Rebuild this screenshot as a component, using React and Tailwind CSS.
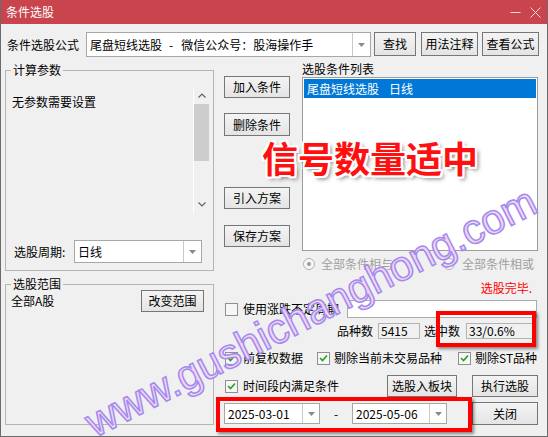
import React from "react";

const Btn = ({ children, className = "" }) => (
  <div
    className={`shrink-0 flex items-center justify-center border border-[#767676] bg-gradient-to-b from-[#f4f4f4] to-[#e4e4e4] text-[12px] leading-none text-black ${className}`}
  >
    {children}
  </div>
);

const Arrow = () => (
  <svg width="7" height="4" viewBox="0 0 7 4">
    <path d="M0 0H7L3.5 4Z" fill="#8a8a8a" />
  </svg>
);

const Combo = ({ children, className = "", arrowClass = "w-[18px]" }) => (
  <div className={`shrink-0 flex border border-[#a7a7a7] bg-white ${className}`}>
    <div className="flex-1 flex items-center pl-[3px] overflow-hidden whitespace-nowrap">{children}</div>
    <div className={`border-l border-[#c8c8c8] flex items-center justify-center ${arrowClass}`}>
      <Arrow />
    </div>
  </div>
);

const Check = ({ checked, className = "" }) => (
  <div
    className={`shrink-0 w-[13px] h-[13px] border border-[#8f8f8f] bg-[#f6f6f6] flex items-center justify-center ${className}`}
  >
    {checked && (
      <svg width="9" height="8" viewBox="0 0 9 8">
        <path d="M1 4L3.5 6.5L8 1.5" fill="none" stroke="#22a022" strokeWidth="1.6" />
      </svg>
    )}
  </div>
);

const Radio = ({ checked, className = "" }) => (
  <div
    className={`shrink-0 w-[12px] h-[12px] rounded-full border border-[#b4b4b4] bg-[#f6f6f6] flex items-center justify-center ${className}`}
  >
    {checked && <div className="w-[4px] h-[4px] rounded-full bg-[#9a9a9a]" />}
  </div>
);

const Field = ({ children, className = "" }) => (
  <div
    className={`shrink-0 h-[16px] border border-[#b3b3b3] bg-[#f0f0f0] pl-[2px] leading-[14px] ${className}`}
  >
    {children}
  </div>
);

export default function App() {
  return (
    <div className="relative w-[548px] h-[437px] overflow-hidden bg-[#f0f0f0] border-x border-b border-[#6b6b6b] font-['Noto_Sans_CJK_SC',sans-serif] text-[12px] text-black leading-[16px]">
      {/* Title bar */}
      <div className="h-[24px] bg-[#c9444c] flex items-center pl-[5px] pr-[6px] text-white">
        <span className="leading-[16px]">条件选股</span>
        <div className="ml-auto flex items-center gap-[9px]">
          <svg width="11" height="11" viewBox="0 0 11 11">
            <path d="M0.5 5.5H10.5" stroke="#f6dcdd" strokeWidth="1" />
          </svg>
          <svg width="11" height="11" viewBox="0 0 11 11">
            <path d="M0.5 0.5L10.5 10.5M10.5 0.5L0.5 10.5" stroke="#f6dcdd" strokeWidth="1" />
          </svg>
        </div>
      </div>

      {/* Formula row */}
      <div className="mt-[8px] flex items-start pl-[6px] h-[25px]">
        <div className="shrink-0 w-[79px] leading-[25px]">条件选股公式</div>
        <Combo className="w-[285px] h-[25px]">
          <span>尾盘短线选股</span>
          <span className="ml-[7px] mr-[8px]">-</span>
          <span>微信公众号：股海操作手</span>
        </Combo>
        <Btn className="ml-[3px] w-[42px] h-[24px]">查找</Btn>
        <Btn className="ml-[5px] w-[57px] h-[24px]">用法注释</Btn>
        <Btn className="ml-[4px] w-[57px] h-[24px]">查看公式</Btn>
      </div>

      {/* Main */}
      <div className="mt-[5px] flex">
        {/* Left column */}
        <div className="shrink-0 ml-[4px] w-[209px] flex flex-col">
          <fieldset className="h-[209px] border border-[#b5b5b5]">
            <legend className="ml-[5px] px-[2px] leading-[16px]">计算参数</legend>
            <div className="mt-[9px] h-[126px] flex">
              <div className="flex-1 pl-[6px] pt-[7px]">无参数需要设置</div>
              <div className="w-[16px] mr-[4px] border-l border-white flex flex-col">
                <div className="h-[17px] flex items-center justify-center">
                  <svg width="8" height="5" viewBox="0 0 8 5">
                    <path d="M0.5 4.5L4 1L7.5 4.5" fill="none" stroke="#606060" strokeWidth="1.2" />
                  </svg>
                </div>
                <div className="w-full h-[57px] bg-[#cdcdcd]" />
                <div className="flex-1" />
                <div className="h-[17px] flex items-center justify-center">
                  <svg width="8" height="5" viewBox="0 0 8 5">
                    <path d="M0.5 0.5L4 4L7.5 0.5" fill="none" stroke="#606060" strokeWidth="1.2" />
                  </svg>
                </div>
              </div>
            </div>
            <div className="mt-[27px] flex items-center h-[23px] pl-[8px]">
              <div className="shrink-0 w-[60px]">选股周期:</div>
              <Combo className="w-[128px] h-[23px]">日线</Combo>
            </div>
          </fieldset>

          <fieldset className="mt-[5px] h-[149px] border border-[#b5b5b5]">
            <legend className="ml-[5px] px-[2px] leading-[16px]">选股范围</legend>
            <div className="-mt-[2px] h-[22px] flex items-center justify-between pl-[5px] pr-[9px]">
              <span>全部A股</span>
              <Btn className="w-[63px] h-[22px]">改变范围</Btn>
            </div>
          </fieldset>
        </div>

        {/* Right area */}
        <div className="shrink-0 ml-[10px] w-[316px] flex flex-col">
          <div className="flex h-[210px]">
            <div className="shrink-0 w-[66px] flex flex-col">
              <Btn className="mt-[14px] h-[22px]">加入条件</Btn>
              <Btn className="mt-[15px] h-[23px]">删除条件</Btn>
              <Btn className="mt-[51px] h-[22px]">引入方案</Btn>
              <Btn className="mt-[16px] h-[22px]">保存方案</Btn>
            </div>
            <div className="shrink-0 ml-[12px] w-[236px] flex flex-col">
              <div className="h-[15px] leading-[13px]">选股条件列表</div>
              <div className="h-[174px] border border-[#9c9c9c] bg-white pt-[1px] px-[1px]">
                <div className="h-[19px] bg-[#0078d7] text-white pl-[3px] leading-[19px] whitespace-nowrap">
                  尾盘短线选股<span className="ml-[10px]">日线</span>
                </div>
              </div>
              <div className="mt-[5px] h-[16px] flex items-center text-[#a0a0a0]">
                <Radio checked className="ml-[1px]" />
                <span className="ml-[6px] whitespace-nowrap">全部条件相与</span>
                <Radio className="ml-[50px]" />
                <span className="ml-[7px] whitespace-nowrap">全部条件相或</span>
              </div>
            </div>
          </div>

          <div className="mt-[9px] h-[14px] leading-[14px] flex justify-end pr-[8px] text-[#ff0000]">选股完毕.</div>

          <div className="mt-[5px] h-[18px] flex items-center">
            <Check className="ml-[1px]" />
            <span className="shrink-0 ml-[5px] w-[96px] whitespace-nowrap">使用涨跌不定周期</span>
            <div className="shrink-0 ml-[8px] w-[190px] h-[18px] bg-white border border-[#ababab]" />
          </div>

          <div className="mt-[5px] h-[16px] flex items-center whitespace-nowrap">
            <span className="shrink-0 ml-[113px]">品种数</span>
            <Field className="ml-[5px] w-[42px]">5415</Field>
            <span className="shrink-0 ml-[4px]">选中数</span>
            <Field className="ml-[6px] w-[67px]">33/0.6%</Field>
          </div>

          <div className="mt-[12px] h-[14px] flex items-center whitespace-nowrap">
            <Check checked className="ml-[1px]" />
            <span className="shrink-0 ml-[5px]">前复权数据</span>
            <Check checked className="ml-[14px]" />
            <span className="shrink-0 ml-[4px]">剔除当前未交易品种</span>
            <Check checked className="ml-[16px]" />
            <span className="shrink-0 ml-[4px]">剔除ST品种</span>
          </div>

          <div className="mt-[10px] h-[22px] flex items-center whitespace-nowrap">
            <Check checked className="ml-[1px]" />
            <span className="shrink-0 ml-[5px] w-[96px]">时间段内满足条件</span>
            <Btn className="ml-[48px] w-[70px] h-[22px]">选股入板块</Btn>
            <Btn className="ml-[15px] w-[66px] h-[22px]">执行选股</Btn>
          </div>

          <div className="mt-[5px] h-[23px] flex items-center">
            <Combo className="w-[96px] h-[21px]" arrowClass="w-[17px]">2025-03-01</Combo>
            <div className="shrink-0 w-[32px] text-center">-</div>
            <Combo className="w-[95px] h-[21px]" arrowClass="w-[17px]">2025-05-06</Combo>
            <Btn className="ml-[25px] w-[66px] h-[23px]">关闭</Btn>
          </div>
        </div>
      </div>

      {/* Overlay: big red annotation */}
      <div className="absolute left-[261px] top-[139px] text-[36px] leading-[36px] font-bold text-[#ff1010] whitespace-nowrap pointer-events-none [text-shadow:-2px_-2px_0_#fff,2px_-2px_0_#fff,-2px_2px_0_#fff,2px_2px_0_#fff,0_2px_0_#fff,0_-2px_0_#fff,2px_0_0_#fff,-2px_0_0_#fff,3px_3px_4px_rgba(0,0,0,0.55)]">
        信号数量适中
      </div>

      {/* Overlay: red highlight boxes */}
      <div className="absolute left-[435px] top-[311px] w-[100px] h-[36px] border-[4px] border-[#ff0000] shadow-[2px_2px_3px_rgba(0,0,0,0.45)] pointer-events-none" />
      <div className="absolute left-[215px] top-[397px] w-[256px] h-[35px] border-[4px] border-[#ff0000] shadow-[2px_2px_3px_rgba(0,0,0,0.45)] pointer-events-none" />

      {/* Overlay: watermark */}
      <div className="absolute left-[310px] top-[312px] -translate-x-1/2 -translate-y-1/2 rotate-[-27deg] whitespace-nowrap pointer-events-none font-['Liberation_Sans',sans-serif] font-normal text-[42px] leading-none text-[#f9d2f3] [-webkit-text-stroke:1.5px_#a08cee]">
        www.gushichanghong.com
      </div>
    </div>
  );
}
